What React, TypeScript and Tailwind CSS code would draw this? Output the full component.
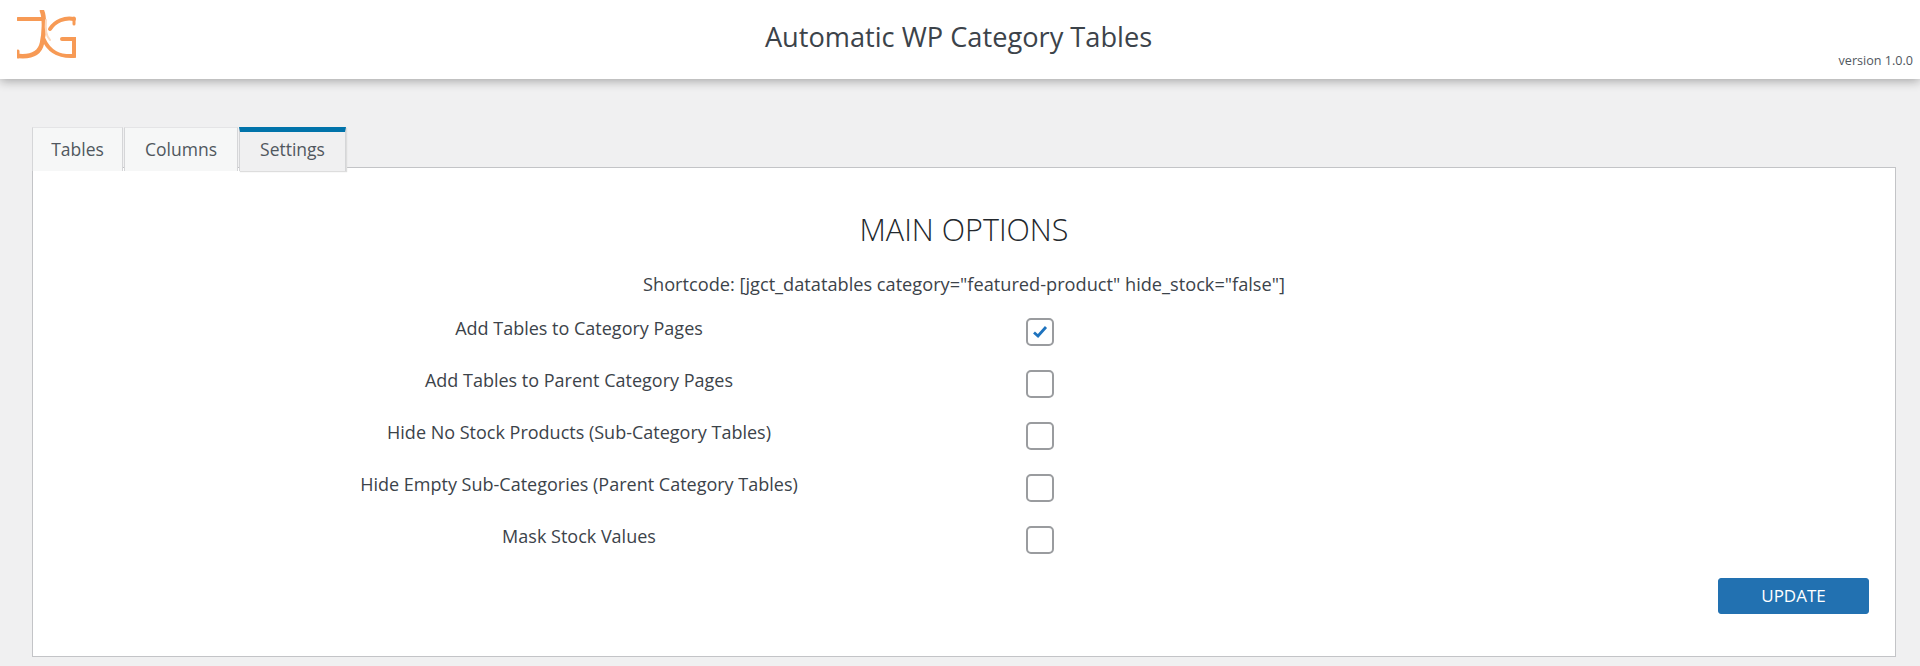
import React from 'react';

const options = [
  { label: 'Add Tables to Category Pages', checked: true },
  { label: 'Add Tables to Parent Category Pages', checked: false },
  { label: 'Hide No Stock Products (Sub-Category Tables)', checked: false },
  { label: 'Hide Empty Sub-Categories (Parent Category Tables)', checked: false },
  { label: 'Mask Stock Values', checked: false },
];

const Logo = () => (
  <svg width="62" height="52" viewBox="0 0 62 52" fill="none" stroke="#f79a55" strokeLinecap="round">
    <path d="M1 9 H26" strokeWidth="4" />
    <path d="M25 1 C28 8 27 24 25 33 C23 43 15 47 2 46" strokeWidth="4.5" />
    <path d="M1 41 L1 47" strokeWidth="3" />
    <path d="M57 9 C48 7 38 11 33 19" strokeWidth="4" />
    <path d="M57 8 L57 14" strokeWidth="3" />
    <path d="M26 28 C32 42 42 47 57 46 L57 29 H45" strokeWidth="4" />
    <path d="M29 10 C28 20 29 26 33 30" stroke="#fbd9bf" strokeWidth="2" />
  </svg>
);

const Tab = ({ label, active, className }: { label: string; active?: boolean; className: string }) => (
  <div
    className={`flex items-center justify-center border-l border-r border-[#d5d6d8] text-[17.5px] text-[#50575e] ${className} ${
      active ? 'border-t-[5px] border-t-[#0073aa] bg-[#f0f0f1] pb-[5px] shadow-[1px_1px_1px_#ddd]' : 'border-t border-t-[#e4e4e6] bg-[#f6f7f7]'
    }`}
  >
    {label}
  </div>
);

export default function App() {
  return (
    <div className="h-[666px] overflow-hidden bg-[#f0f0f1] font-['Open_Sans','Noto_Sans',sans-serif] text-[#3c434a]">
      <header className="relative flex h-[79px] items-center justify-center bg-white shadow-[0_2px_10px_rgba(0,0,0,0.32)]">
        <div className="absolute left-[17px] top-[10px]">
          <Logo />
        </div>
        <h1 className="mr-[3px] mb-[5px] text-[27.2px] font-normal text-[#3c434a]">Automatic WP Category Tables</h1>
        <span className="absolute right-[7px] top-[52px] text-[12.6px] text-[#50575e]">version 1.0.0</span>
      </header>

      <main className="px-[32px] pt-[48px] pr-[24px]">
        <div className="relative z-10 mb-[-4px] flex h-[44px] gap-px">
          <Tab label="Tables" className="w-[91px]" />
          <Tab label="Columns" className="w-[114px]" />
          <Tab label="Settings" active className="w-[107px]" />
        </div>

        <section className="flex h-[490px] flex-col items-center border border-[#c3c4c7] bg-white">
          <h2 className="mt-[42px] text-[30.5px] leading-[38px] font-light text-[#23282d]">MAIN OPTIONS</h2>
          <p className="mt-[24px] text-[18.2px] leading-[24px] text-[#3c434a]">
            Shortcode: [jgct_datatables category="featured-product" hide_stock="false"]
          </p>

          <div className="mt-[10px] flex w-full flex-col pl-[306px]">
            {options.map((o) => (
              <div key={o.label} className="flex h-[52px] items-center">
                <span className="mb-[7px] w-[480px] text-center text-[18px] text-[#3c434a]">{o.label}</span>
                <span className="ml-[207px] flex h-[28px] w-[28px] items-center justify-center rounded-[5px] border-2 border-[#9a9c9f] bg-white">
                  {o.checked && (
                    <svg width="16" height="14" viewBox="0 0 16 14" fill="none">
                      <path d="M2 7.5 L6 11 L14 2" stroke="#1e73be" strokeWidth="2.8" />
                    </svg>
                  )}
                </span>
              </div>
            ))}
          </div>

          <div className="mt-[12px] flex w-full justify-end pr-[26px]">
            <button
              type="button"
              className="h-[36px] w-[151px] rounded-[3px] border border-[#2271b1] bg-[#2271b1] text-[17px] text-white"
            >
              UPDATE
            </button>
          </div>
        </section>
      </main>
    </div>
  );
}
